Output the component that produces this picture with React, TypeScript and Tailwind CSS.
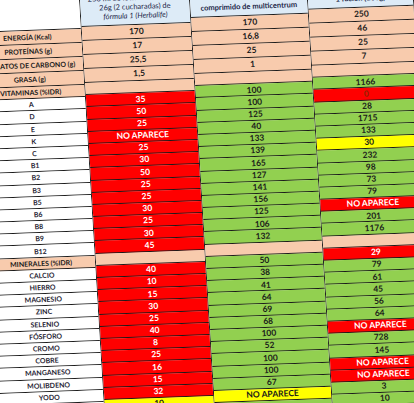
type Tone = "s" | "r" | "g" | "y" | "w" | "z";
type Cell = [string, Tone];

const tone: Record<Tone, string> = {
  s: "bg-[#f8cbad] text-[#1a1a1a]",
  r: "bg-[#ff0000] text-white",
  g: "bg-[#92d050] text-[#1a1a1a]",
  y: "bg-[#ffff00] text-[#1a1a1a]",
  w: "bg-white text-[#1f2433]",
  z: "bg-[#ff0000] text-[#8f2400]",
};

const NA = "NO APARECE";

const labels = {
  top: ["ENERGÍA (Kcal)", "PROTEÍNAS (g)", "HIDRATOS DE CARBONO (g)", "GRASA (g)"],
  vit: ["A", "D", "E", "K", "C", "B1", "B2", "B3", "B5", "B6", "B8", "B9", "B12"],
  min: [
    "CALCIO",
    "HIERRO",
    "MAGNESIO",
    "ZINC",
    "SELENIO",
    "FÓSFORO",
    "CROMO",
    "COBRE",
    "MANGANESO",
    "MOLIBDENO",
    "YODO",
    "POTASIO",
  ],
};

type Col = {
  width: string;
  offset: string;
  header: React.ReactNode;
  headerBg: string;
  top: string[];
  vit: Cell[];
  min: Cell[];
  isLabel?: boolean;
};

const columns: Col[] = [
  {
    width: "w-[109px]",
    offset: "mt-[12px]",
    headerBg: "bg-white",
    header: null,
    isLabel: true,
    top: labels.top,
    vit: labels.vit.map((l) => [l, "w"] as Cell),
    min: labels.min.map((l) => [l, "w"] as Cell),
  },
  {
    width: "w-[110px]",
    offset: "mt-[10px]",
    headerBg: "bg-[#ddebf7]",
    header: (
      <>
        <span>250 ml de leche desnatada y</span>
        <span>26g (2 cucharadas) de</span>
        <span className="italic">fórmula 1 (Herbalife)</span>
      </>
    ),
    top: ["170", "17", "25,5", "1,5"],
    vit: [
      ["35", "r"], ["50", "r"], ["25", "r"], [NA, "r"], ["25", "r"], ["30", "r"], ["50", "r"],
      ["25", "r"], ["25", "r"], ["30", "r"], ["25", "r"], ["30", "r"], ["45", "r"],
    ],
    min: [
      ["40", "r"], ["10", "r"], ["15", "r"], ["30", "r"], ["25", "r"], ["40", "r"], ["8", "r"],
      ["25", "r"], ["16", "r"], ["15", "r"], ["32", "r"], ["10", "y"], ["", "r"],
    ],
  },
  {
    width: "w-[118px]",
    offset: "mt-[5px]",
    headerBg: "bg-[#ddebf7]",
    header: <span className="font-bold">comprimido de multicentrum</span>,
    top: ["170", "16,8", "25", "1"],
    vit: [
      ["100", "g"], ["100", "g"], ["125", "g"], ["40", "g"], ["133", "g"], ["139", "g"], ["165", "g"],
      ["127", "g"], ["141", "g"], ["156", "g"], ["125", "g"], ["106", "g"], ["132", "g"],
    ],
    min: [
      ["50", "g"], ["38", "g"], ["41", "g"], ["64", "g"], ["69", "g"], ["68", "g"], ["100", "g"],
      ["52", "g"], ["100", "g"], ["100", "g"], ["67", "g"], [NA, "y"], ["", "g"],
    ],
  },
  {
    width: "w-[106px]",
    offset: "mt-[1px]",
    headerBg: "bg-[#ddebf7]",
    header: <span className="font-bold">1 ración (100g)</span>,
    top: ["250", "46", "25", "7"],
    vit: [
      ["1166", "g"], ["0", "z"], ["28", "g"], ["1715", "g"], ["133", "g"], ["30", "y"], ["232", "g"],
      ["98", "g"], ["73", "g"], ["79", "g"], [NA, "r"], ["201", "g"], ["1176", "g"],
    ],
    min: [
      ["29", "r"], ["79", "g"], ["61", "g"], ["45", "g"], ["56", "g"], ["64", "g"], [NA, "r"],
      ["728", "g"], ["145", "g"], [NA, "r"], [NA, "r"], ["3", "g"], ["10", "g"],
    ],
  },
];

const cellBase =
  "flex shrink-0 items-center justify-center border-b border-[#1b1b1b] leading-none whitespace-nowrap";

function Column({ col }: { col: Col }) {
  const text = col.isLabel ? "text-[7px] font-bold" : "text-[8.5px] font-bold";
  return (
    <div className={`flex shrink-0 flex-col border-r-[1.5px] border-[#1b1b1b] ${col.width} ${col.offset}`}>
      <div
        className={`flex h-[60px] flex-col items-center justify-end border-b border-[#1b1b1b] pb-[4px] text-[7.5px] leading-[9px] text-[#1c2647] ${col.headerBg}`}
      >
        {col.header}
      </div>
      {col.top.map((v, i) => (
        <div key={`t${i}`} className={`${cellBase} h-[14px] ${text} ${tone.s}`}>
          {v}
        </div>
      ))}
      <div className={`${cellBase} h-[12.2px] ${text} ${tone.s}`}>
        {col.isLabel ? "VITAMINAS (%IDR)" : ""}
      </div>
      {col.vit.map(([v, t], i) => (
        <div key={`v${i}`} className={`${cellBase} h-[12.2px] ${text} ${tone[t]}`}>
          {v}
        </div>
      ))}
      <div className={`${cellBase} h-[12.2px] ${text} ${tone.s}`}>
        {col.isLabel ? "MINERALES (%IDR)" : ""}
      </div>
      {col.min.map(([v, t], i) => (
        <div key={`m${i}`} className={`${cellBase} h-[12.2px] ${text} ${tone[t]}`}>
          {v}
        </div>
      ))}
    </div>
  );
}

export default function App() {
  return (
    <div className="h-[403px] w-[414px] overflow-hidden bg-white font-[Lato,sans-serif]">
      <div className="-ml-[29px] -mt-[40px] flex w-max origin-[29px_40px] skew-x-[3.5deg] -skew-y-[2.1deg] items-start">
        {columns.map((c, i) => (
          <Column key={i} col={c} />
        ))}
      </div>
    </div>
  );
}
